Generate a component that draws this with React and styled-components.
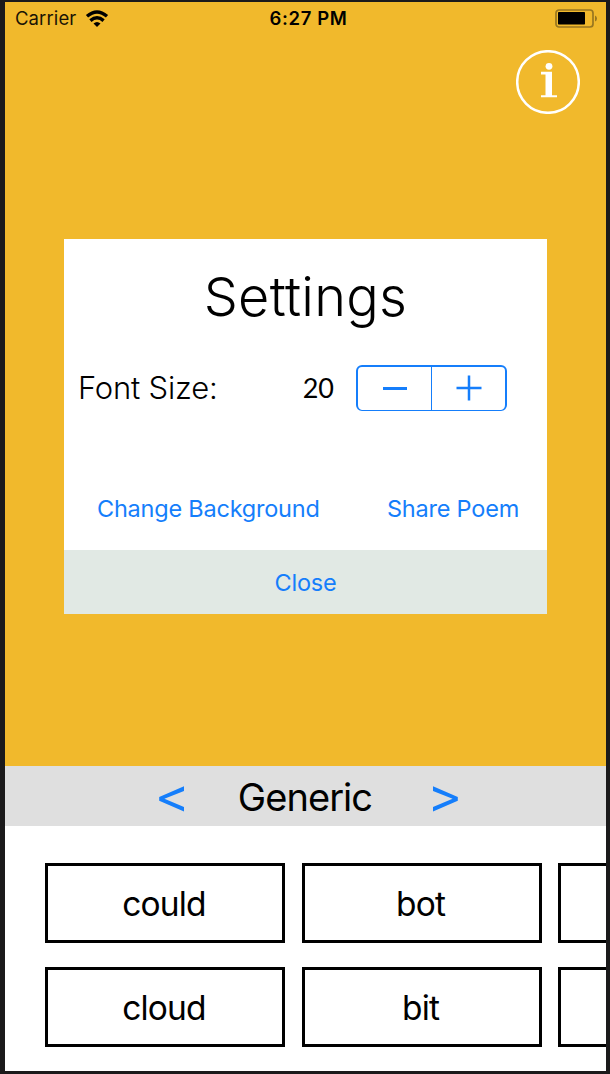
import React from "react";
import styled, { createGlobalStyle } from "styled-components";

const BLUE = "#157efb";

const Global = createGlobalStyle`
  * { box-sizing: border-box; }
  html, body { margin: 0; background: #1b1a1b; }
  body { overflow: hidden; }
  button { border: 0; padding: 0; background: none; cursor: pointer; }
`;

const Bezel = styled.div`
  width: 610px;
  height: 1074px;
  padding: 2px 4px 3px 5px;
  background: #1b1a1b;
  font-family: Inter, "Liberation Sans", sans-serif;
  color: #000;
`;

const Screen = styled.main`
  height: 1069px;
  display: flex;
  flex-direction: column;
  overflow: hidden;
  background: #fff;
`;

const Canvas = styled.section`
  height: 764px;
  flex: none;
  background: #f1b92c;
`;

const StatusBar = styled.header`
  height: 33px;
  padding: 0 9px 0 10px;
  display: grid;
  grid-template-columns: 1fr auto 1fr;
  align-items: center;
  font-size: 18.5px;
  line-height: 33px;
`;

const Carrier = styled.div`
  display: flex;
  align-items: center;
  gap: 9px;
  letter-spacing: 0.1px;
  color: #1a1405;
`;

const Clock = styled.div`
  font-weight: 600;
  letter-spacing: 0.6px;
  padding-left: 5px;
`;

const BatterySlot = styled.div`
  display: flex;
  justify-content: flex-end;
`;

const InfoRow = styled.div`
  height: 79px;
  padding: 15px 26px 0 0;
  display: flex;
  justify-content: flex-end;
`;

const InfoButton = styled.button`
  width: 64px;
  height: 64px;
`;

const Dialog = styled.section`
  width: 483px;
  height: 375px;
  margin: 125px 0 0 59px;
  display: flex;
  flex-direction: column;
  background: #fff;
`;

const Title = styled.h1`
  margin: 0;
  height: 118px;
  font: 300 54px/115px Inter, sans-serif;
  letter-spacing: 0.3px;
  text-align: center;
`;

const SizeRow = styled.div`
  height: 62px;
  padding: 0 40px 0 14px;
  display: flex;
  align-items: center;
`;

const SizeLabel = styled.label`
  flex: 1;
  font: 300 31px/62px Inter, sans-serif;
  letter-spacing: -0.2px;
`;

const SizeValue = styled.output`
  margin-right: 22px;
  font: 400 27px/62px Lato, sans-serif;
`;

const Stepper = styled.div`
  width: 151px;
  height: 46px;
  display: flex;
  border: 2px solid ${BLUE};
  border-bottom-width: 1px;
  border-radius: 6px;
`;

const Step = styled.button`
  flex: 1;
  display: flex;
  align-items: center;
  justify-content: center;
  padding-bottom: 2px;
  & + & { border-left: 1px solid ${BLUE}; }
`;

const Actions = styled.div`
  height: 131px;
  padding: 70px 28px 0 33px;
  display: flex;
  justify-content: space-between;
  align-items: flex-start;
`;

const LinkButton = styled.button`
  color: ${BLUE};
  font: 400 23.5px/40px Inter, sans-serif;
  letter-spacing: -0.22px;
  white-space: nowrap;
`;

const CloseBar = styled.footer`
  height: 64px;
  padding-top: 2px;
  display: flex;
  align-items: center;
  justify-content: center;
  background: #e1e9e4;
`;

const CategoryBar = styled.nav`
  height: 60px;
  flex: none;
  padding: 0 147px 0 152px;
  display: flex;
  align-items: center;
  justify-content: space-between;
  background: #dfdfdf;
`;

const ArrowButton = styled.button`
  width: 28px;
  height: 30px;
  margin-top: 4px;
`;

const CategoryName = styled.h2`
  margin: 0;
  padding: 2px 6px 0 0;
  font-size: 38px;
  line-height: 60px;
  font-weight: 400;
  letter-spacing: -0.95px;
`;

const WordGrid = styled.section`
  padding: 37px 0 0 40px;
  display: grid;
  grid-template-columns: repeat(3, 240px);
  grid-auto-rows: 80px;
  gap: 24px 16.5px;
`;

const Word = styled.button`
  padding: 2px 2px 0 0;
  border: 3px solid #000;
  background: #fff;
  font: 400 33.5px/72px Inter, sans-serif;
  letter-spacing: -0.85px;
  color: #000;
`;

const WifiIcon = () => (
  <svg width="24" height="18" viewBox="0 0 24 18">
    <g fill="none" stroke="#000" strokeWidth="3.4">
      <path d="M2 6.3Q12 -2.3 22 6.3" />
      <path d="M5.4 10.6Q12 5 18.6 10.6" />
    </g>
    <path d="M8.5 13.4Q12 10.4 15.5 13.4L12 16.9Z" />
  </svg>
);

const BatteryIcon = () => (
  <svg width="42" height="19" viewBox="0 0 42 19">
    <rect x="1" y="1" width="37" height="17" rx="3" fill="none" stroke="#987620" strokeWidth="1.7" />
    <rect x="3" y="3" width="27" height="12.5" rx="0.7" />
    <path d="M40 6.4Q42 7.2 42 9.5T40 12.6Z" fill="#987620" />
  </svg>
);

const InfoIcon = () => (
  <svg width="64" height="64" viewBox="0 0 64 64">
    <circle cx="32" cy="32" r="30.8" fill="none" stroke="#fff" strokeWidth="2.5" />
    <circle cx="33" cy="16.3" r="3.4" fill="#fff" />
    <path d="M25 21.8H36V45.2H41V47.3H25V45.2H29.5V24.5H25Z" fill="#fff" />
  </svg>
);

const Arrow = ({ flip }) => (
  <svg width="28" height="30" viewBox="0 0 28 30">
    <path
      d="M27 3.2V7.9L7.4 15.8L27 23.9V28.6L2.2 17.7V13.9Z"
      fill={BLUE}
      transform={flip ? "translate(29 0) scale(-1 1)" : undefined}
    />
  </svg>
);

const rows = [["could", "bot", ""], ["cloud", "bit", ""]];

export default function App() {
  return (
    <Bezel>
      <Global />
      <Screen>
        <Canvas>
          <StatusBar>
            <Carrier>Carrier <WifiIcon /></Carrier>
            <Clock>6:27 PM</Clock>
            <BatterySlot><BatteryIcon /></BatterySlot>
          </StatusBar>
          <InfoRow>
            <InfoButton aria-label="Information"><InfoIcon /></InfoButton>
          </InfoRow>
          <Dialog>
            <Title>Settings</Title>
            <SizeRow>
              <SizeLabel>Font Size:</SizeLabel>
              <SizeValue>20</SizeValue>
              <Stepper>
                <Step aria-label="Decrease">
                  <svg width="26" height="26"><path d="M1 13.5H25" stroke={BLUE} strokeWidth="3" /></svg>
                </Step>
                <Step aria-label="Increase">
                  <svg width="26" height="26"><path d="M0.5 13H25.5M13 0.5V25.5" stroke={BLUE} strokeWidth="2.5" /></svg>
                </Step>
              </Stepper>
            </SizeRow>
            <Actions>
              <LinkButton>Change Background</LinkButton>
              <LinkButton>Share Poem</LinkButton>
            </Actions>
            <CloseBar><LinkButton>Close</LinkButton></CloseBar>
          </Dialog>
        </Canvas>
        <CategoryBar>
          <ArrowButton aria-label="Previous"><Arrow /></ArrowButton>
          <CategoryName>Generic</CategoryName>
          <ArrowButton aria-label="Next"><Arrow flip /></ArrowButton>
        </CategoryBar>
        <WordGrid>
          {rows.flat().map((word, i) => <Word key={i}>{word}</Word>)}
        </WordGrid>
      </Screen>
    </Bezel>
  );
}
